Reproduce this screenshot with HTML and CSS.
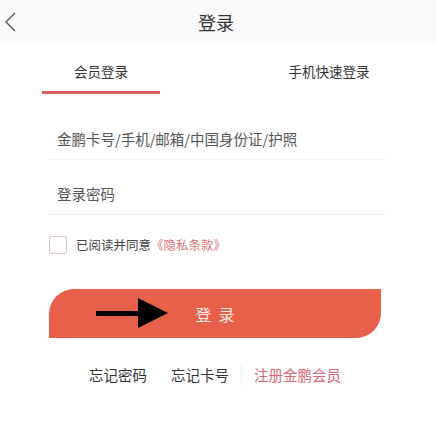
FILE: index.html
```html
<!DOCTYPE html>
<html lang="zh-CN">
<head>
    <meta charset="UTF-8">
    <title>登录</title>
    <link rel="stylesheet" href="styles.css">
</head>
<body>
    <div class="header">
        <span class="back">
            <svg width="12" height="20" viewBox="0 0 12 20"><path d="M11 1 L2 10 L11 19" fill="none" stroke="#555" stroke-width="1.4"/></svg>
        </span>
        <div class="title">登录</div>
    </div>
    <div class="tabs">
        <div class="tab active">会员登录</div>
        <div class="tab">手机快速登录</div>
    </div>
    <form class="form">
        <div class="field">金鹏卡号/手机/邮箱/中国身份证/护照</div>
        <div class="field">登录密码</div>
        <label class="agree">
            <span class="box"></span>
            <span>已阅读并同意<span class="privacy">《隐私条款》</span></span>
        </label>
        <div class="login-btn">
            <svg class="arrow" width="72" height="30" viewBox="0 0 72 30"><rect x="0" y="13" width="44" height="5" fill="#000"/><polygon points="42,0 72,15 42,30" fill="#000"/></svg>
            <span>登录</span>
        </div>
    </form>
    <div class="links">
        <span>忘记密码</span>
        <span>忘记卡号</span>
        <span class="sep"></span>
        <span class="register">注册金鹏会员</span>
    </div>
</body>
</html>
```

FILE: styles.css
```css
body {
    margin: 0;
    font-family: "Noto Sans CJK SC", "Noto Sans", sans-serif;
    background-color: #fff;
    color: #333;
    width: 436px;
}
.header {
    height: 44px;
    background-color: #fafafa;
    display: flex;
    justify-content: center;
    align-items: center;
    position: relative;
}
.back {
    position: absolute;
    left: 4px;
    top: 12px;
}
.title {
    font-size: 18px;
    color: #333;
    margin-left: -4px;
}
.tabs {
    display: flex;
    justify-content: space-between;
    padding: 0 48px 0 42px;
    height: 50px;
}
.tab {
    width: 118px;
    text-align: center;
    font-size: 13.5px;
    line-height: 20px;
    padding-top: 17px;
    height: 30px;
    color: #333;
    border-bottom: 3px solid transparent;
}
.tab.active {
    border-bottom-color: #d9605e;
}
.form {
    padding: 0 51px 0 49px;
    display: flex;
    flex-direction: column;
}
.field {
    margin-top: 11px;
    margin-left: 1px;
    height: 55px;
    box-sizing: border-box;
    display: flex;
    align-items: flex-end;
    line-height: 20px;
    padding: 0 0 10px 7px;
    font-size: 14.5px;
    color: #555;
    border-bottom: 1px solid #f0f0f0;
}
.field + .field {
    margin-top: 0;
}
.agree {
    display: flex;
    align-items: center;
    gap: 9px;
    margin-top: 20px;
    font-size: 12.5px;
    color: #444;
}
.box {
    width: 16px;
    height: 16px;
    border: 1.5px solid #d9c3c8;
    border-radius: 2px;
}
.privacy {
    color: #e07272;
}
.login-btn {
    margin-top: 35px;
    width: 332px;
    height: 49px;
    background-color: #e9604a;
    border-radius: 25px 0 25px 0;
    display: flex;
    justify-content: center;
    align-items: center;
    position: relative;
    color: #fcebe3;
    font-size: 16px;
    letter-spacing: 7px;
}
.login-btn span {
    margin-left: 7px;
}
.arrow {
    position: absolute;
    left: 47px;
    top: 9px;
}
.links {
    display: flex;
    align-items: center;
    margin-top: 26px;
    padding-left: 89px;
    font-size: 14.5px;
    color: #333;
}
.links span:nth-child(2) {
    margin-left: 24px;
}
.sep {
    width: 1px;
    height: 20px;
    background-color: #eee;
    margin: 0 12px;
}
.register {
    color: #d86a78;
}
```
